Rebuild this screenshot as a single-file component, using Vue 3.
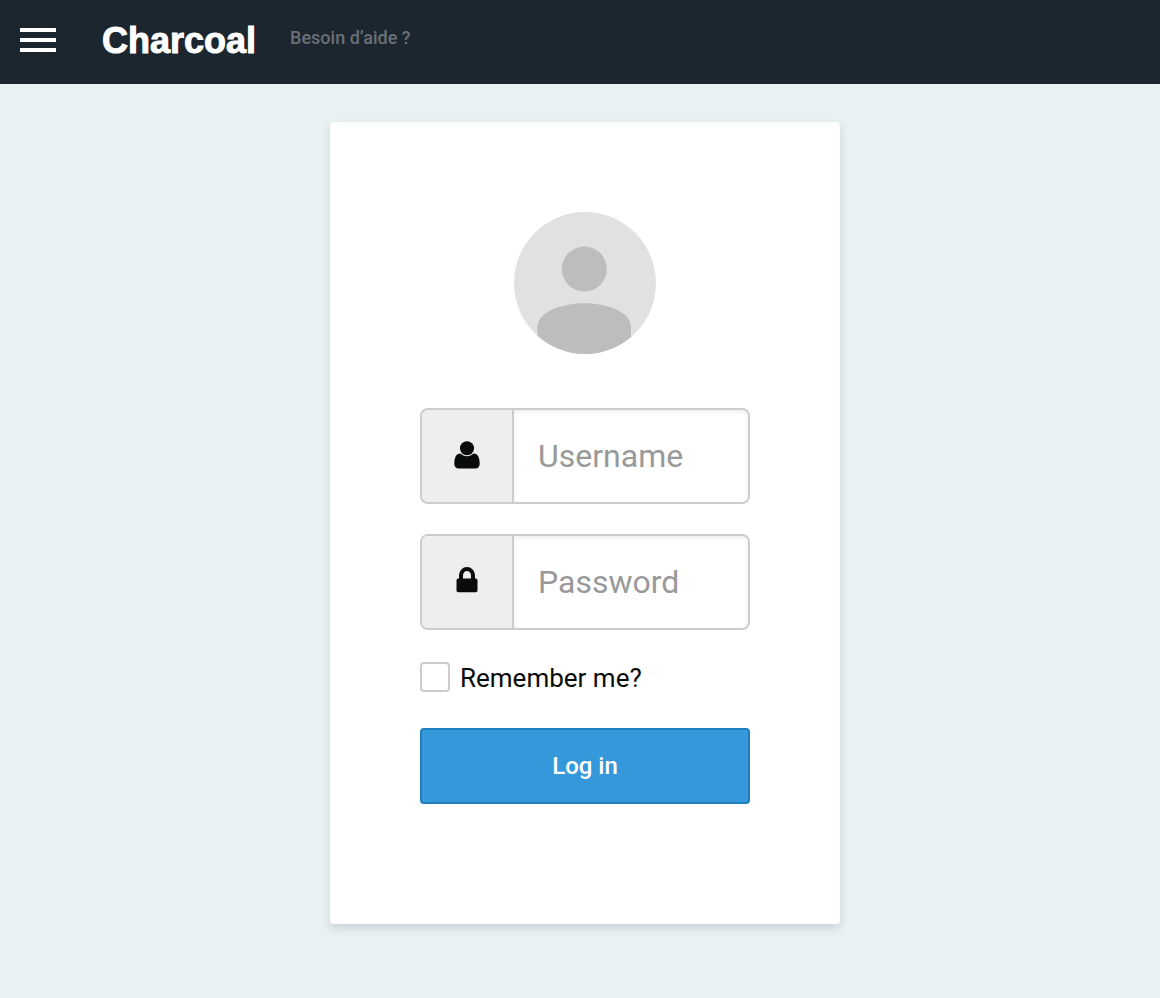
<script setup>
import { ref } from 'vue'

const username = ref('')
const password = ref('')
const remember = ref(false)
</script>

<template>
  <div class="page">
    <header class="header">
      <button class="menu" type="button" aria-label="Menu">
        <span class="menu-bar"></span>
        <span class="menu-bar"></span>
        <span class="menu-bar"></span>
      </button>
      <a class="brand" href="#">Charcoal</a>
      <a class="help" href="#">Besoin d’aide ?</a>
    </header>

    <main class="main">
      <form class="card" @submit.prevent>
        <svg class="avatar" viewBox="0 0 142 142" aria-hidden="true">
          <defs>
            <clipPath id="avatar-clip"><circle cx="71" cy="71" r="71" /></clipPath>
          </defs>
          <g clip-path="url(#avatar-clip)">
            <rect width="142" height="142" fill="#e1e1e1" />
            <circle cx="70.300" cy="57" r="22.500" fill="#bdbdbd" />
            <path d="M23.500 142V115C23.500 101 46 91.300 70.500 91.300S117 101 117 115V142Z" fill="#bdbdbd" />
          </g>
        </svg>

        <div class="field">
          <label class="addon" for="username" aria-label="Username">
            <svg class="icon" viewBox="0 1 28 30" aria-hidden="true">
              <path d="M7.500 13.600C3.500 13.300 1.300 17.500 1.300 23.700C1.300 26.700 3 28.500 5.700 28.500H22.300C25 28.500 26.700 26.700 26.700 23.700C26.700 17.500 24.500 13.300 20.500 13.600C18.800 15.300 16.500 16.200 14 16.200S9.200 15.300 7.500 13.600Z" />
              <circle cx="14" cy="8.200" r="7" />
            </svg>
          </label>
          <input id="username" v-model="username" class="input" type="text" placeholder="Username" autocomplete="username" />
        </div>

        <div class="field">
          <label class="addon" for="password" aria-label="Password">
            <svg class="icon" viewBox="0 1 28 30" aria-hidden="true">
              <path fill-rule="evenodd" d="M6 12.500V9.300A8 8.300 0 0 1 22 9.300V12.500H22.800Q24.500 12.500 24.500 14.200V24.500Q24.500 26.200 22.800 26.200H5.200Q3.500 26.200 3.500 24.500V14.200Q3.500 12.500 5.200 12.500ZM10 12.500H18V9.300A4 4.400 0 0 0 10 9.300Z" />
            </svg>
          </label>
          <input id="password" v-model="password" class="input" type="password" placeholder="Password" autocomplete="current-password" />
        </div>

        <div class="remember">
          <input id="remember" v-model="remember" class="checkbox" type="checkbox" />
          <label for="remember">Remember me?</label>
        </div>

        <button class="submit" type="submit">Log in</button>
      </form>
    </main>
  </div>
</template>

<style>
body {
  margin: 0;
  background: #e9f1f3;
}
</style>

<style scoped>
.page {
  min-height: 100vh;
  box-sizing: border-box;
  font-family: Roboto, "Liberation Sans", sans-serif;
  color: #0a0c0b;
}

.header {
  display: flex;
  align-items: flex-start;
  height: 84px;
  box-sizing: border-box;
  padding: 20px;
  background: #1c262f;
}

.menu {
  display: flex;
  flex-direction: column;
  gap: 6px;
  width: 36px;
  margin: 8px 46px 0 0;
  padding: 0;
  border: 0;
  background: none;
  cursor: pointer;
}

.menu-bar {
  height: 4px;
  background: #fff;
}

.brand {
  font: bold 36px/42px "Liberation Sans", Arial, sans-serif;
  -webkit-text-stroke: 1px #fff;
  color: #fff;
  text-decoration: none;
}

.help {
  margin-left: 34px;
  font-size: 18px;
  font-weight: 500;
  line-height: 36px;
  color: #6a7077;
  text-decoration: none;
}

.main {
  display: flex;
  justify-content: center;
  padding: 38px 0 40px 10px;
}

.card {
  display: flex;
  flex-direction: column;
  width: 100%;
  max-width: 510px;
  box-sizing: border-box;
  padding: 90px 90px 120px;
  border-radius: 4px;
  background: #fff;
  box-shadow: 0 4px 10px rgba(0, 30, 30, 0.14);
}

.avatar {
  align-self: center;
  width: 142px;
  height: 142px;
  margin-bottom: 54px;
}

.field {
  display: flex;
  height: 96px;
  box-sizing: border-box;
  margin-bottom: 30px;
  border: 2px solid #ccc;
  border-radius: 8px;
  overflow: hidden;
}

.addon {
  display: flex;
  flex: none;
  align-items: center;
  justify-content: center;
  width: 92px;
  box-sizing: border-box;
  border-right: 2px solid #ccc;
  background: #eee;
}

.icon {
  width: 28px;
  height: 30px;
  fill: #0a0c0b;
}

.input {
  flex: 1;
  min-width: 0;
  padding: 0 24px;
  border: 0;
  outline: 0;
  border-radius: 0 6px 6px 0;
  background: #fff;
  box-shadow: inset 0 2px 4px rgba(0, 0, 0, 0.07);
  font: 32px Roboto, "Liberation Sans", sans-serif;
  color: #0a0c0b;
}

.input::placeholder {
  color: #999;
  opacity: 1;
}

.remember {
  display: flex;
  align-items: flex-start;
  gap: 10px;
  margin: 2px 0 34px;
  font-size: 26px;
  line-height: 32px;
}

.checkbox {
  appearance: none;
  width: 30px;
  height: 30px;
  margin: 0;
  box-sizing: border-box;
  border: 2px solid #ccc;
  border-radius: 4px;
  background: #fff;
}

.checkbox:checked {
  background: #3498db;
}

.submit {
  height: 76px;
  padding: 0;
  border: 2px solid #217dbb;
  border-radius: 4px;
  background: #3498db;
  font: 500 24px Roboto, "Liberation Sans", sans-serif;
  color: #fff;
  cursor: pointer;
}
</style>
